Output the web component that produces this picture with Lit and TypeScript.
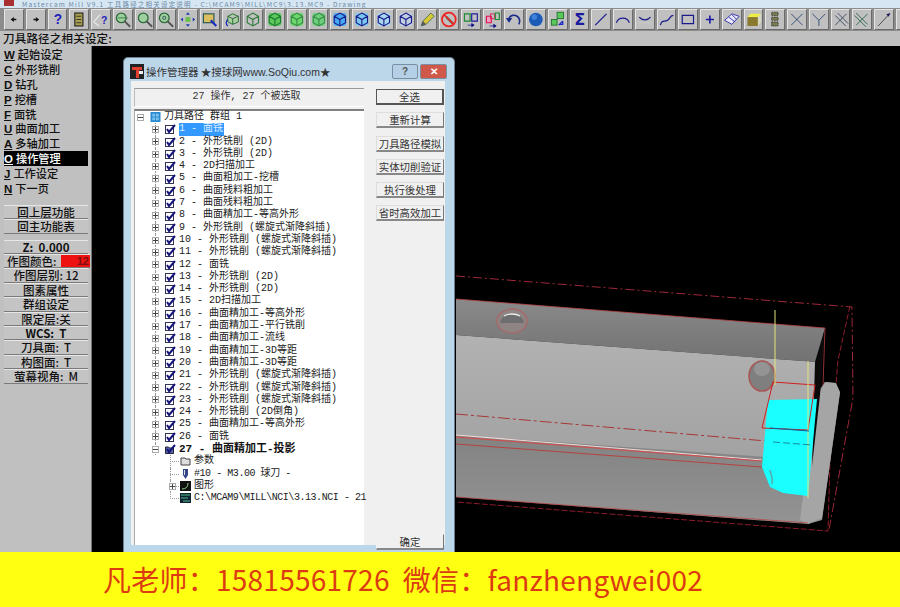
import { LitElement, html, css, svg } from 'lit';
import { customElement } from 'lit/decorators.js';

const line = (d: string, c = '#1a1a8c', w = 1.5) => svg`<path d=${d} fill="none" stroke=${c} stroke-width=${w} />`;

const cube = (c: string, bg: string) => svg`
  ${bg ? svg`<rect x="3" y="3" width="16" height="16" rx="3" fill=${bg} />` : ''}
  <path d="M11 3l7 4v8l-7 4-7-4V7z M4 7l7 4 7-4 M11 11v8" fill="none" stroke=${c} stroke-width="1.4" />`;

const lens = (inner: unknown = '') => svg`
  <circle cx="9" cy="9" r="6" fill="#9fd09f" stroke="#2d6b3a" stroke-width="1.6" />
  <path d="M13 13l7 7" stroke="#555" stroke-width="2.4" />${inner}`;

const cross = (d: string, c = '#1a3a6a') => svg`<path d=${d} fill="none" stroke=${c} stroke-width="1" />`;

const ICONS: Record<string, unknown> = {
  back: svg`<path d="M7 11l4-3v2h3v2h-3v2z" fill="#111" />`,
  fwd: svg`<path d="M15 11l-4-3v2H8v2h3v2z" fill="#111" />`,
  help: svg`<text x="11" y="17" text-anchor="middle" font-size="17" font-weight="700" font-family="Liberation Sans" fill="#2222bb">?</text>`,
  file: svg`<rect x="6" y="3" width="10" height="16" fill="#a8a050" stroke="#222" stroke-width="1.4" /><path d="M8 7h6M8 11h6M8 15h6" stroke="#222" />`,
  hint: svg`<path d="M2 14l8-9M2 14l7 5" stroke="#eee" stroke-width="1.3" fill="none" /><text x="15" y="16" text-anchor="middle" font-size="13" font-weight="700" font-family="Liberation Sans" fill="#2222bb">?</text>`,
  zoomw: lens(svg`<path d="M5 9h12" stroke="#2d6b3a" />`),
  zoom: lens(),
  zoom8: lens(svg`<circle cx="9" cy="9" r="2" fill="none" stroke="#245" />`),
  pan: svg`<rect x="8" y="8" width="6" height="6" fill="#6ac04a" /><path d="M11 2l2.5 3h-5zM11 20l2.5-3h-5zM2 11l3-2.500v5zM20 11l-3-2.500v5z" fill="#1a3ab0" />`,
  sel: svg`<rect x="3" y="4" width="13" height="11" fill="#dcc060" stroke="#255" stroke-width="1.4" /><path d="M12 12l7 7" stroke="#1a2ac0" stroke-width="2.6" />`,
  rot: svg`<path d="M12 4l7 3v7l-7 3-6-3V7z M6 7l6 3 7-3 M12 10v7" fill="#a8d0a0" stroke="#2d6b3a" stroke-width="1.2" /><path d="M6 11a5 5 0 0 0 0 8" fill="none" stroke="#1a2ac0" stroke-width="1.6" />`,
  cg1: cube('#2d7a3a', ''),
  cg2: cube('#1c7a30', '#5cc85c'),
  cg3: cube('#3a8a4a', '#6ad86a'),
  cg4: cube('#3a8a4a', '#6ad07a'),
  cb1: cube('#1a1a8c', '#45aaf0'),
  cb2: cube('#1a1a8c', '#78c8f0'),
  cb3: cube('#1a1a8c', '#a8d8f0'),
  cb4: cube('#1a1a8c', '#c0d0e0'),
  pencil: svg`<path d="M4 19l2-6 10-10 4 4-10 10z" fill="#d8c838" stroke="#3a6a3a" /><path d="M4 19l2-6 4 4z" fill="#556" />`,
  no: svg`<path d="M8 8l8 8" stroke="#3a7a5a" stroke-width="3" /><circle cx="11" cy="11" r="8.500" fill="none" stroke="#ee2222" stroke-width="2.200" /><path d="M5 5l12 12" stroke="#ee2222" stroke-width="2" />`,
  dup1: svg`<path d="M12 4h7v9h-7z" fill="none" stroke="#1a1aa0" stroke-width="1.400" /><path d="M3 4h7v9H3z" fill="none" stroke="#1a8a2a" stroke-width="1.400" /><path d="M7 18h8M15 18l-3-2v4z" stroke="#1a1aa0" />`,
  dup2: svg`<path d="M3 7h6v8H3z" fill="#f0a0c0" stroke="#e01050" stroke-width="1.400" /><path d="M8 4h5v6H8z" fill="none" stroke="#e01050" /><path d="M14 3h5v8h-5z" fill="none" stroke="#1a8a2a" stroke-width="1.400" /><path d="M7 19h8M15 19l-3-2v4z" stroke="#1a1aa0" />`,
  undo: svg`<path d="M5 9a7 7 0 1 1 12 8" fill="none" stroke="#1a2a8a" stroke-width="2" /><path d="M1 9h8l-4 6z" fill="#1a2a8a" />`,
  sphere: svg`<circle cx="11" cy="11" r="8.500" fill="#1c5cb8" /><circle cx="9" cy="8" r="3.500" fill="#3f80d8" />`,
  squares: svg`<rect x="3" y="11" width="7" height="7" fill="#5ac85a" stroke="#146a24" /><rect x="10" y="2" width="8" height="8" fill="#5ac85a" stroke="#146a24" /><path d="M12 18l5-5M17 13v4h-4" stroke="#1a2ac0" stroke-width="1.600" fill="none" />`,
  sigma: svg`<text x="11" y="18" text-anchor="middle" font-size="20" font-weight="700" font-family="DejaVu Sans" fill="#1a1aa0">Σ</text>`,
  ln: line('M4 18L18 4'),
  arc: line('M3 15a8.500 8.500 0 0 1 16 0'),
  bow: svg`${line('M4 8a9 9 0 0 0 14 0')}<path d="M3 15h16" stroke="#ccc" />`,
  spline: line('M3 18c2-8 5-3 9-6s3-6 7-6'),
  rect: line('M4 6h14v10H4z'),
  plus: line('M11 6v10M6 11h10', '#1a1aa0', 2),
  surf: svg`<path d="M2 12l9-8 9 3-9 10z" fill="#e8e8f8" stroke="#1a1aa0" /><path d="M7 8l8 6M11 5l6 6" stroke="#1a1aa0" />`,
  solid: svg`<path d="M3 8h13v11H3z" fill="#8a7a30" /><path d="M3 8l4-4h13l-4 4z" fill="#eeee40" /><path d="M16 8l4-4v10l-4 5z" fill="#d8d8c0" />`,
  spring: svg`<path d="M7 2h8v4H7zM7 8h8v4H7zM7 14h8v5H7z" fill="#7a7a50" stroke="#333" stroke-dasharray="2 1" />`,
  x1: cross('M4 4l14 14M4 18L18 4'),
  x2: cross('M3 4l8 8 8-8M11 12v7'),
  x3: cross('M4 6l13 13M7 3l13 13M4 18L18 4', '#2a3a5a'),
  x4: cross('M4 3l14 14M2 6l14 14M4 18L18 4', '#1a5a3a'),
  arrow: svg`<path d="M4 19L18 4" stroke="#333" /><path d="M19 3l-5 1.500 3 3z" fill="#1a1a60" />`,
  blank: '',
};

const TOOLS = [
  'back', 'fwd', 'help', 'file', 'hint', 'zoomw', 'zoom', 'zoom8', 'pan', 'sel', 'rot',
  'cg1', 'cg2', 'cg3', 'cg4', 'cb1', 'cb2', 'cb3', 'cb4', 'pencil', 'no',
  'dup1', 'dup2', 'undo', 'sphere', 'squares', 'sigma', 'ln', 'arc', 'bow', 'spline',
  'rect', 'plus', 'surf', 'solid', 'spring', 'x1', 'x2', 'x3', 'x4', 'arrow', 'blank',
];

const MENU = [
  ['W', '起始设定'], ['C', '外形铣削'], ['D', '钻孔'], ['P', '挖槽'], ['F', '面铣'],
  ['U', '曲面加工'], ['A', '多轴加工'], ['O', '操作管理'], ['J', '工作设定'], ['N', '下一页'],
];

const OPS = [
  '面铣', '外形铣削 (2D)', '外形铣削 (2D)', '2D扫描加工', '曲面粗加工-挖槽', '曲面残料粗加工',
  '曲面残料粗加工', '曲面精加工-等高外形', '外形铣削 (螺旋式渐降斜插)', '外形铣削 (螺旋式渐降斜插)',
  '外形铣削 (螺旋式渐降斜插)', '面铣', '外形铣削 (2D)', '外形铣削 (2D)', '2D扫描加工',
  '曲面精加工-等高外形', '曲面精加工-平行铣削', '曲面精加工-流线', '曲面精加工-3D等距',
  '曲面精加工-3D等距', '外形铣削 (螺旋式渐降斜插)', '外形铣削 (螺旋式渐降斜插)',
  '外形铣削 (螺旋式渐降斜插)', '外形铣削 (2D倒角)', '曲面精加工-等高外形', '面铣',
];

const check = svg`<svg class="ico" viewBox="0 0 11 10"><rect x="0.500" y="1.500" width="8" height="8" fill="#fff" stroke="#335" /><path d="M2 5l2 3 6-7" fill="none" stroke="#14147a" stroke-width="2" /></svg>`;

const checkOpen = svg`<svg class="ico" viewBox="0 0 11 10"><path d="M0.500 3h3l1 1h4v5.500h-8z" fill="#5566aa" stroke="#223" /><path d="M2 5l2 3 6-7" fill="none" stroke="#14147a" stroke-width="2" /></svg>`;

@customElement('app-root')
export class AppRoot extends LitElement {
  static styles = css`
    :host {
      display: flex;
      flex-direction: column;
      width: 900px;
      height: 607px;
      overflow: hidden;
      background: #000;
      font-family: 'Noto Sans CJK SC', 'Liberation Sans', sans-serif;
      color: #111;
    }

    .title-strip {
      height: 8px;
      flex: none;
      overflow: hidden;
      display: flex;
      background: #d6e6f2;
      color: #6a88a6;
      font-size: 6.500px;
      line-height: 8px;
      letter-spacing: 1.200px;
      padding-left: 4px;
      gap: 8px;
      white-space: nowrap;
    }
    .title-strip svg { width: 10px; height: 6px; flex: none; }

    .toolbar {
      height: 23px;
      flex: none;
      display: flex;
      padding-left: 3px;
      background: #8c8c8c;
    }
    .tool {
      width: 19.750px;
      height: 21px;
      flex: none;
      margin: 1px;
      background: #c0c0c0;
      border-top: 1px solid #e4e4e4;
      border-left: 1px solid #e4e4e4;
      box-sizing: border-box;
      border-right: 1px solid #6a6a6a;
      border-bottom: 1px solid #6a6a6a;
    }
    .tool svg { display: block; width: 100%; height: 100%; }

    .prompt {
      height: 15px;
      flex: none;
      background: #c0c0c0;
      font-size: 11.500px;
      font-weight: 500;
      line-height: 15px;
      padding-left: 3px;
      letter-spacing: 0.200px;
    }

    .main { flex: 1; display: flex; min-height: 0; }

    .side {
      width: 92px;
      flex: none;
      box-sizing: border-box;
      background: #c0c0c0;
      border-right: 1px solid #777;
      padding: 1px 3px 0 4px;
    }
    .menu-item {
      height: 14.900px;
      line-height: 14.900px;
      font-size: 11.200px;
      font-weight: 500;
      white-space: nowrap;
      width: 84px;
    }
    .menu-item b { font-family: 'Liberation Sans', sans-serif; font-size: 11.500px; text-decoration: underline; margin-right: 3px; }
    .menu-item.on { background: #000; color: #fff; }

    .side-btns { margin-top: 9px; }
    .s-btn {
      height: 14.400px;
      line-height: 13.400px;
      box-sizing: border-box;
      text-align: center;
      font-size: 11.500px;
      font-weight: 500;
      white-space: nowrap;
      background: #c4c4c4;
      border-top: 1px solid #e6e6e6;
      border-bottom: 1px solid #7a7a7a;
    }
    .s-btn.gap { margin-bottom: 6px; }
    .color-row { display: flex; justify-content: space-between; text-align: left; padding-left: 3px; margin-right: -2px; }
    .color-val {
      width: 28px;
      background: #ee1111;
      color: #7a1010;
      font-family: 'Liberation Sans', sans-serif;
      font-weight: 700;
      font-size: 11px;
      text-align: right;
      padding-right: 1px;
    }

    .canvas { flex: 1; position: relative; background: #000; }
    .scene { position: absolute; inset: 0; width: 100%; height: 100%; }

    .dialog {
      position: absolute;
      left: 31px;
      top: 11px;
      width: 332px;
      height: 495px;
      box-sizing: border-box;
      border: 1px solid #6a7f92;
      border-bottom: none;
      border-radius: 5px 5px 0 0;
      background: #bcd6ea;
      padding: 30px 9px 0 10px;
    }
    .dlg-title {
      position: absolute;
      left: 4px;
      top: 3px;
      right: 4px;
      height: 20px;
      display: flex;
      align-items: center;
      gap: 2px;
      font-size: 10.500px;
      color: #333;
      white-space: nowrap;
    }
    .dlg-title svg { width: 14px; height: 15px; flex: none; margin-left: 2px; }
    .dlg-title .latin { font-family: 'Liberation Sans', sans-serif; font-size: 10.500px; }
    .caps { margin-left: auto; display: flex; gap: 2px; margin-right: 3px; }
    .cap {
      width: 26px;
      height: 15px;
      border: 1px solid #7a8ea0;
      border-radius: 2px;
      box-sizing: border-box;
      background: #b4cfe6;
      text-align: center;
      font: 700 10px/13px 'Liberation Sans', sans-serif;
      color: #555;
    }
    .cap.close { width: 27px; background: #d0584a; color: #fff; }

    .dlg-body {
      height: 100%;
      background: #f0f0f0;
      margin: -7px 0 0 -3px;
      padding: 7px 0 0 3px;
      display: flex;
      gap: 12px;
      box-sizing: border-box;
    }
    .left-col { width: 230px; flex: none; display: flex; flex-direction: column; }
    .status {
      height: 17px;
      flex: none;
      border-top: 1px solid #9a9a9a;
      border-left: 1px solid #bbb;
      border-bottom: 1px solid #fff;
      font: 10px/16px 'Liberation Mono', 'Noto Sans CJK SC', monospace;
      text-align: center;
      padding-right: 6px;
      color: #333;
    }
    .tree {
      flex: 1;
      margin-top: 2px;
      background: #fff;
      border-top: 2px solid #808080;
      border-left: 1px solid #aaa;
      padding: 0 0 0 2px;
      font: 10px/12.300px 'Liberation Mono', 'Noto Sans CJK SC', monospace;
      color: #222;
    }
    .row { height: 12.300px; display: flex; align-items: center; white-space: pre; position: relative; }
    .row.l1 { padding-left: 15px; }
    .row.l1::before, .row.l2::before {
      content: '';
      position: absolute;
      top: 0;
      bottom: 0;
      border-left: 1px dotted #999;
    }
    .row.l1::before { left: 18px; }
    .row.l2::before { left: 33px; }
    .row.l2::after {
      content: '';
      position: absolute;
      left: 33px;
      width: 9px;
      top: 6px;
      border-top: 1px dotted #999;
    }
    .row.last::before { bottom: 6px; }
    .row.l2 { padding-left: 43px; }
    .row.l2.has-exp { padding-left: 32px; }
    .row.bold { font-weight: 700; color: #111; font-size: 11px; }
    .exp {
      width: 7px;
      height: 7px;
      flex: none;
      box-sizing: border-box;
      border: 1px solid #aaa;
      margin-right: 6px;
      position: relative;
      z-index: 1;
      background:
        linear-gradient(#444, #444) center / 5px 1px no-repeat,
        linear-gradient(#444, #444) center / 1px 5px no-repeat,
        #fff;
    }
    .exp.open { background: linear-gradient(#444, #444) center / 5px 1px no-repeat, #fff; }
    .has-exp .exp { margin-right: 4px; }
    .ico { width: 11px; height: 10px; flex: none; margin-right: 3px; position: relative; z-index: 1; background: #fff; }
    .label { padding: 0 1px 0 0; }
    .label.sel { background: #3399ff; color: #dcecff; }
    .tight { letter-spacing: -0.450px; }

    .right-col { width: 68px; flex: none; display: flex; flex-direction: column; gap: 7.300px; }
    .d-btn {
      height: 16px;
      box-sizing: border-box;
      background: #f0f0f0;
      border-right: 1px solid #777;
      border-bottom: 2px solid #888;
      border-top: 1px solid #ddd;
      border-left: 1px solid #ddd;
      text-align: center;
      font-size: 10.400px;
      line-height: 14px;
      white-space: nowrap;
      color: #333;
    }
    .d-btn.def { border: 1px solid #555; border-right-width: 2px; border-bottom-width: 2px; margin-top: 1px; }
    .d-btn.ok { margin-top: auto; margin-bottom: -5px; border-left-color: #f0f0f0; border-top-color: #f0f0f0; }

    .footer {
      height: 55px;
      flex: none;
      box-sizing: border-box;
      background: #ffff12;
      color: #dc3b12;
      font-size: 28px;
      letter-spacing: 0.250px;
      line-height: 55px;
      padding-left: 103px;
      white-space: pre;
    }
  `;

  private renderScene() {
    return svg`
      <defs>
        <linearGradient id="top" x1="0" x2="0" y1="0" y2="1"><stop offset="0" stop-color="#8a8a8a" /><stop offset="1" stop-color="#727272" /></linearGradient>
        <linearGradient id="face" x1="0" x2="0" y1="0" y2="1"><stop offset="0" stop-color="#b2b2b2" /><stop offset="1" stop-color="#a2a2a2" /></linearGradient>
        <linearGradient id="low" x1="0" x2="0" y1="0" y2="1"><stop offset="0" stop-color="#777" /><stop offset="0.450" stop-color="#858585" /><stop offset="1" stop-color="#939393" /></linearGradient>
      </defs>
      <path d="M456 276L852 307 853 398 829 530" fill="none" stroke="#a02838" stroke-dasharray="9 3 2 3" />
      <path d="M850 306L838 360 830 460 828 531 456 502" fill="none" stroke="#8e1c2a" stroke-dasharray="6 2" />
      <path d="M456 497L808 524 822 520 840 393 835 383 825 382 812 400 456 430z" fill="url(#low)" />
      <path d="M825 382L836 383 840 392 822 518 808 524 800 520 815 400z" fill="#a5a5a5" />
      <path d="M456 299L825 328 817 362 456 335z" fill="url(#top)" />
      <path d="M456 335L817 362 812 460 456 435z" fill="url(#face)" />
      <path d="M825 328L820 395 812 466 815 362z" fill="#0a0a0a" />
      <path d="M456 299L825 328 823 385" fill="none" stroke="#b84040" stroke-width="0.800" />
      <path d="M456 435L762 460" stroke="#eed8d8" stroke-width="1.200" />
      <path d="M456 437L762 461" stroke="#d84848" />
      <path d="M456 444L762 467" stroke="#b84040" />
      <path d="M456 497L808 523" stroke="#b84848" stroke-width="0.800" />
      <path d="M456 414L812 445" stroke="#a83838" stroke-dasharray="12 3 3 3" />
      <path d="M768 400L817 399 808 496 783 493 770 487 762 467z" fill="#1affff" />
      <path d="M770 470q3 10 2 14" stroke="#5aa" stroke-width="1.500" fill="none" />
      <ellipse cx="512" cy="321" rx="15" ry="12" fill="#8e8484" stroke="#a86868" stroke-width="1.400" />
      <path d="M500 323a12 9 0 0 1 24 0" fill="#6e6e6e" />
      <path d="M504 316a10 5 0 0 1 16 0" fill="none" stroke="#eee" stroke-width="1.400" />
      <ellipse cx="762" cy="376" rx="13" ry="15" fill="#7f7f80" stroke="#a85858" stroke-width="1.600" />
      <ellipse cx="762" cy="369" rx="8" ry="7" fill="#949494" />
      <path d="M773 382L815 385 808 430 762 428z" fill="none" stroke="#d02020" />
      <path d="M775 310V385" stroke="#e4e47a" />
      <path d="M808 361L808 498" stroke="#e4e47a" />
      <path d="M770 428L809 431" stroke="#155a9a" />
      <path d="M773 442L812 445" stroke="#178a9a" stroke-dasharray="7 3" />
    `;
  }

  render() {
    return html`
      <div class="title-strip">
        <svg viewBox="0 0 10 6"><rect width="10" height="6" fill="#a83030" /></svg>
        <span>Mastercam Mill V9.1 工具路径之相关设定说明 - C:\\MCAM9\\MILL\\MC9\\3.13.MC9 - Drawing</span>
      </div>
      <div class="toolbar">
        ${TOOLS.map((t) => html`<div class="tool"><svg viewBox="0 0 22 22">${ICONS[t]}</svg></div>`)}
      </div>
      <div class="prompt">刀具路径之相关设定:</div>
      <div class="main">
        <div class="side">
          ${MENU.map(([k, v]) => html`<div class="menu-item ${k === 'O' ? 'on' : ''}"><b>${k}</b>${v}</div>`)}
          <div class="side-btns">
            <div class="s-btn">回上层功能</div>
            <div class="s-btn gap">回主功能表</div>
            <div class="s-btn"><b>Z:&nbsp; 0.000</b></div>
            <div class="s-btn color-row"><span>作图颜色:</span><span class="color-val">12</span></div>
            <div class="s-btn">作图层别: 12</div>
            <div class="s-btn">图素属性</div>
            <div class="s-btn">群组设定</div>
            <div class="s-btn">限定层:关</div>
            <div class="s-btn"><b>WCS:&nbsp; T</b></div>
            <div class="s-btn">刀具面:&nbsp; T</div>
            <div class="s-btn">构图面:&nbsp; T</div>
            <div class="s-btn">萤幕视角:&nbsp; M</div>
          </div>
        </div>
        <div class="canvas">
          <svg class="scene" viewBox="92 46 808 506">${this.renderScene()}</svg>
          <div class="dialog">
            <div class="dlg-title">
              <svg viewBox="0 0 14 15"><rect width="14" height="15" fill="#222" /><path d="M2 3h10v3H9v8H6V6H2z" fill="#e04030" /><path d="M9 7h4v3H9z" fill="#eee" /></svg>
              <span>操作管理器 ★搜球网<span class="latin">www.SoQiu.com</span>★</span>
              <span class="caps"><span class="cap">?</span><span class="cap close">✕</span></span>
            </div>
            <div class="dlg-body">
              <div class="left-col">
                <div class="status">27 操作, 27 个被选取</div>
                <div class="tree">
                  <div class="row">
                    <span class="exp open"></span>
                    <svg class="ico" viewBox="0 0 11 11"><rect width="11" height="11" fill="#2a8ad0" /><path d="M2 2h3v3H2zM6 2h3v3H6zM2 6h3v3H2zM6 6h3v3H6z" fill="#7cc4ec" /></svg>
                    <span class="label">刀具路径 群组 1</span>
                  </div>
                  ${OPS.map((o, i) => html`
                    <div class="row l1"><span class="exp"></span>${check}<span class="label ${i === 0 ? 'sel' : ''}">${i + 1} - ${o}</span></div>`)}
                  <div class="row l1 bold"><span class="exp open"></span>${checkOpen}<span class="label">27 - 曲面精加工-投影</span></div>
                  <div class="row l2">
                    <svg class="ico" viewBox="0 0 11 10"><path d="M1 2h4l1 1h4v6H1z" fill="#ddd" stroke="#444" /></svg>
                    <span class="label">参数</span>
                  </div>
                  <div class="row l2">
                    <svg class="ico" viewBox="0 0 11 10"><path d="M3 0h5v6L5.500 10 3 6z" fill="#334488" /><path d="M4 1h1v5H4z" fill="#ddd" /></svg>
                    <span class="label tight">#10 - M3.00 球刀 -</span>
                  </div>
                  <div class="row l2 has-exp">
                    <span class="exp"></span>
                    <svg class="ico" viewBox="0 0 11 10"><rect width="11" height="10" fill="#111" /><path d="M2 8q6 0 6-6" fill="none" stroke="#8fd08f" /></svg>
                    <span class="label">图形</span>
                  </div>
                  <div class="row l2 last">
                    <svg class="ico" viewBox="0 0 11 10"><rect width="11" height="10" fill="#123" /><path d="M1 2h9M1 5h7M3 8h7" stroke="#4fc08a" /></svg>
                    <span class="label tight">C:\\MCAM9\\MILL\\NCI\\3.13.NCI - 21</span>
                  </div>
                </div>
              </div>
              <div class="right-col">
                <div class="d-btn def">全选</div>
                <div class="d-btn">重新计算</div>
                <div class="d-btn">刀具路径模拟</div>
                <div class="d-btn">实体切削验证</div>
                <div class="d-btn">执行後处理</div>
                <div class="d-btn">省时高效加工</div>
                <div class="d-btn ok">确定</div>
              </div>
            </div>
          </div>
        </div>
      </div>
      <div class="footer">凡老师：15815561726  微信：fanzhengwei002</div>
    `;
  }
}

declare global {
  interface HTMLElementTagNameMap {
    'app-root': AppRoot;
  }
}
